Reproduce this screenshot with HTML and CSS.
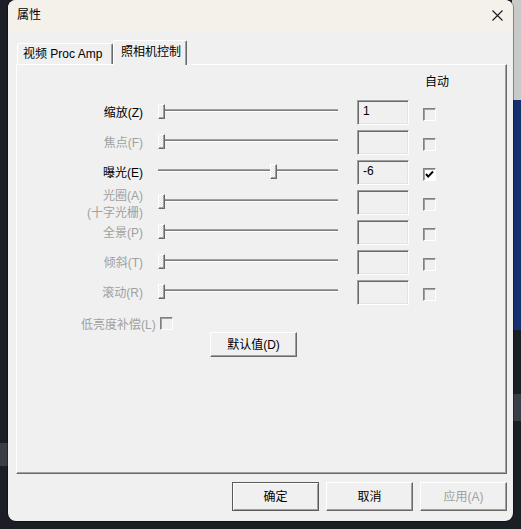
FILE: index.html
```html
<!DOCTYPE html>
<html lang="zh">
<head>
    <meta charset="UTF-8">
    <title>属性</title>
    <link rel="stylesheet" href="styles.css">
</head>
<body>
    <div class="window">
        <!-- Title bar -->
        <div class="titlebar">
            <span class="title">属性</span>
            <svg class="close" width="11" height="11" viewBox="0 0 11 11">
                <path d="M0.5 0.5 L10.5 10.5 M10.5 0.5 L0.5 10.5" stroke="#1a1a1a" stroke-width="1.1" fill="none"/>
            </svg>
        </div>

        <div class="content">
            <!-- Tabs -->
            <div class="tabs">
                <div class="tab">视频 Proc Amp</div>
                <div class="tab active">照相机控制</div>
            </div>

            <!-- Camera control page -->
            <div class="panel">
                <div class="auto-head">自动</div>

                <div class="grid">
                    <div class="label">缩放(Z)</div>
                    <div class="slider"><span class="thumb"></span></div>
                    <div class="field">1</div>
                    <div class="check"></div>

                    <div class="label off">焦点(F)</div>
                    <div class="slider"><span class="thumb dotted"></span></div>
                    <div class="field"></div>
                    <div class="check"></div>

                    <div class="label">曝光(E)</div>
                    <div class="slider"><span class="thumb dotted" style="left: 112px;"></span></div>
                    <div class="field">-6</div>
                    <div class="check checked">
                        <svg width="11" height="11" viewBox="0 0 11 11">
                            <path d="M2 5 L4.2 7.6 L9 2.5" stroke="#000" stroke-width="2" fill="none"/>
                        </svg>
                    </div>

                    <div class="label off two">光圈(A)<br>(十字光栅)</div>
                    <div class="slider"><span class="thumb dotted"></span></div>
                    <div class="field"></div>
                    <div class="check"></div>

                    <div class="label off">全景(P)</div>
                    <div class="slider"><span class="thumb dotted"></span></div>
                    <div class="field"></div>
                    <div class="check"></div>

                    <div class="label off">倾斜(T)</div>
                    <div class="slider"><span class="thumb dotted"></span></div>
                    <div class="field"></div>
                    <div class="check"></div>

                    <div class="label off">滚动(R)</div>
                    <div class="slider"><span class="thumb dotted"></span></div>
                    <div class="field"></div>
                    <div class="check"></div>
                </div>

                <div class="lowlight">
                    <span class="off">低亮度补偿(L)</span>
                    <span class="check"></span>
                </div>

                <button class="btn default-btn">默认值(D)</button>
            </div>

            <!-- Dialog buttons -->
            <div class="actions">
                <button class="btn primary">确定</button>
                <button class="btn">取消</button>
                <button class="btn" disabled>应用(A)</button>
            </div>
        </div>
    </div>
</body>
</html>
```

FILE: styles.css
```css
* {
    box-sizing: border-box;
}
body {
    margin: 0;
    height: 529px;
    overflow: hidden;
    font-family: "Liberation Sans", "Noto Sans CJK SC", sans-serif;
    font-size: 12px;
    line-height: 16px;
    color: #000;
    background:
        linear-gradient(#c9c9c9 0 100px, #15306e 100px 330px, #1c1e25 330px 394px, #3a3d46 394px 421px, #1c1e25 421px) right top / 9px 100% no-repeat,
        linear-gradient(#1c1e25 0 443px, #3a3d46 443px 466px, #1c1e25 466px) left top / 8px 100% no-repeat,
        #1c1e25;
}
.window {
    margin-left: 8px;
    width: 505px;
    height: 521px;
    background-color: #f0f0f0;
    border-radius: 8px;
    box-shadow: 0 0 0 1px rgba(0, 0, 0, 0.35);
    overflow: hidden;
}
.titlebar {
    height: 31px;
    display: flex;
    align-items: center;
    justify-content: space-between;
    padding: 0 10px 1px 9px;
    background-color: #f3f1ea;
}
.title {
    font-size: 12px;
}
.content {
    padding: 0 6px 0 8px;
}
.tabs {
    margin-top: 9px;
    height: 24px;
    display: flex;
    align-items: flex-end;
    position: relative;
    z-index: 1;
}
.tab {
    width: 96px;
    height: 21px;
    margin-left: 1px;
    padding: 2px 0 0 5px;
    white-space: nowrap;
    background-color: #f0f0f0;
    border-top: 1px solid #fff;
    border-left: 1px solid #fff;
    border-right: 1px solid #696969;
    box-shadow: inset -1px 0 #a0a0a0;
    border-radius: 2px 2px 0 0;
}
.tab.active {
    width: 74px;
    height: 25px;
    margin: 0 0 -1px 0;
    padding: 3px 0 0 7px;
}
.panel {
    width: 491px;
    height: 410px;
    padding-top: 9px;
    border-top: 1px solid #fff;
    border-left: 1px solid #fff;
    border-right: 1px solid #696969;
    border-bottom: 1px solid #696969;
    box-shadow: inset -1px -1px #a0a0a0;
}
.auto-head {
    margin-left: 408px;
}
.grid {
    margin: 10px 0 0 43px;
    display: grid;
    grid-template-columns: 98px 199px 66px 13px;
    grid-auto-rows: 25px;
    row-gap: 5px;
}
.label {
    align-self: center;
    padding-right: 15px;
    text-align: right;
    white-space: nowrap;
}
.label.two {
    align-self: start;
    margin-top: -2px;
    line-height: 17px;
}
.off {
    color: #a0a0a0;
}
.slider {
    position: relative;
    width: 180px;
    height: 25px;
}
.slider::before {
    content: "";
    position: absolute;
    left: 0;
    right: 0;
    top: 9px;
    height: 3px;
    background: linear-gradient(#a0a0a0 0 1px, #808080 1px 2px, #fff 2px 3px);
}
.thumb {
    position: absolute;
    left: 0;
    top: 4px;
    width: 7px;
    height: 15px;
    background-color: #f0f0f0;
    border-top: 1px solid #fff;
    border-left: 1px solid #fff;
    border-right: 1px solid #696969;
    border-bottom: 1px solid #696969;
    box-shadow: inset -1px -1px #a0a0a0;
}
.thumb.dotted {
    background: repeating-conic-gradient(#fff 0 25%, #e3e3e3 0 50%) 0 0 / 2px 2px;
}
.field {
    width: 52px;
    height: 25px;
    padding-left: 5px;
    line-height: 21px;
    border-top: 1px solid #a0a0a0;
    border-left: 1px solid #a0a0a0;
    border-right: 1px solid #fff;
    border-bottom: 1px solid #fff;
    box-shadow: inset 1px 1px #696969, inset -1px -1px #e3e3e3;
}
.check {
    display: inline-block;
    width: 13px;
    height: 13px;
    margin-top: 8px;
    align-self: start;
    background-color: #f0f0f0;
    border-top: 1px solid #808080;
    border-left: 1px solid #808080;
    border-right: 1px solid #fff;
    border-bottom: 1px solid #fff;
    box-shadow: inset 1px 1px #a0a0a0;
}
.check.checked {
    background-color: #fff;
}
.check svg {
    display: block;
}
.lowlight {
    margin: 12px 0 0 64px;
    display: flex;
    align-items: center;
    gap: 4px;
}
.lowlight .check {
    margin-top: 0;
}
.btn {
    font: inherit;
    color: #000;
    background-color: #f0f0f0;
    border-top: 1px solid #fff;
    border-left: 1px solid #fff;
    border-right: 1px solid #696969;
    border-bottom: 1px solid #696969;
    box-shadow: inset -1px -1px #a0a0a0;
    padding: 0;
}
.btn:disabled {
    color: #a0a0a0;
}
.default-btn {
    display: block;
    width: 87px;
    height: 25px;
    margin: -1px 0 0 193px;
}
.actions {
    margin-top: 8px;
    display: flex;
    justify-content: flex-end;
    gap: 7px;
}
.actions .btn {
    width: 87px;
    height: 29px;
}
.actions .primary {
    border: 1px solid #5a5a5a;
    box-shadow: inset 1px 1px #fff, inset -1px -1px #a0a0a0;
}
```
